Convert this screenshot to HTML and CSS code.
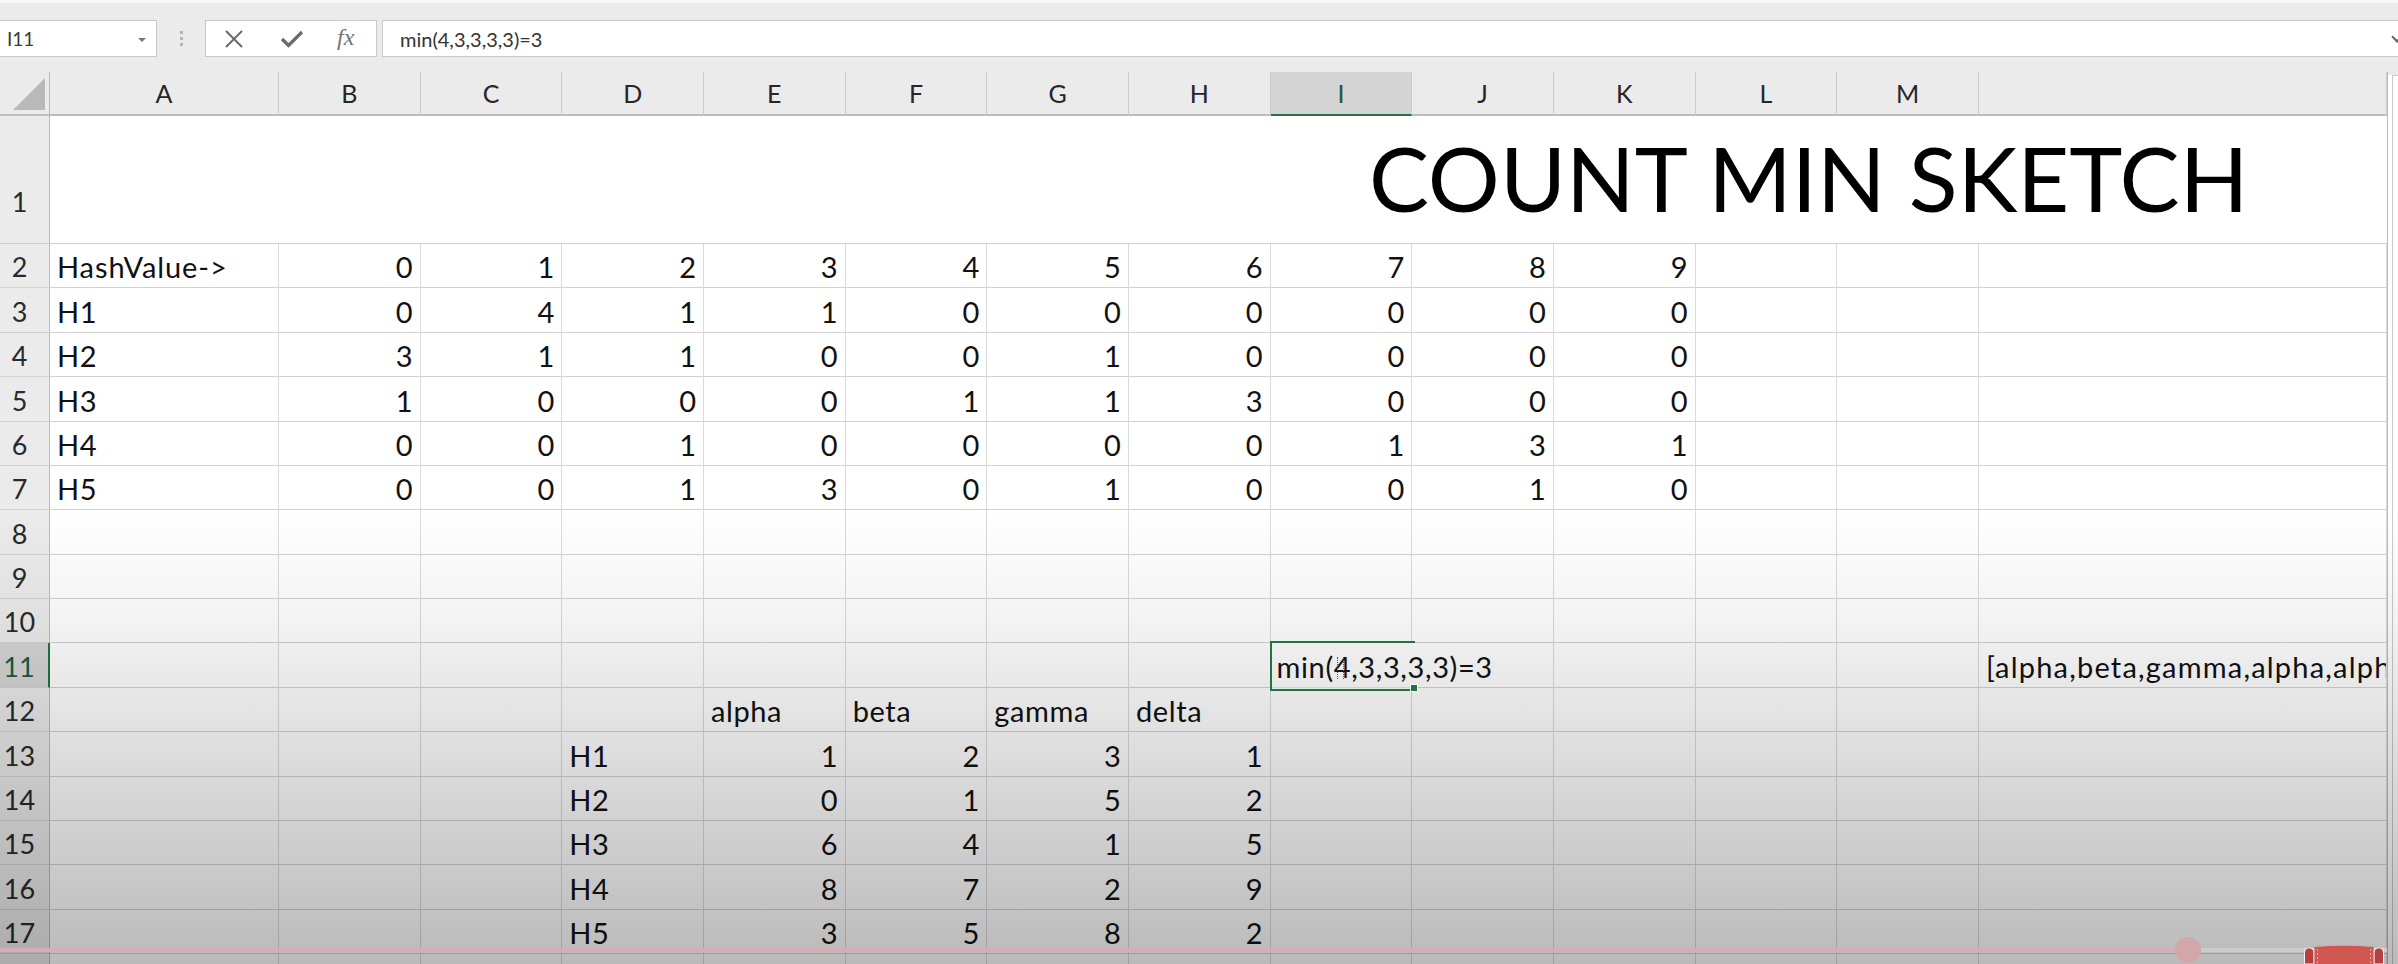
FILE: index.html
```html
<!DOCTYPE html>
<html>
<head>
<meta charset="utf-8">
<title>Count Min Sketch</title>
<link rel="stylesheet" href="styles.css">
</head>
<body>
<div class="top-strip"></div>
<div class="fbar">
  <div class="namebox"><span>I11</span><span class="dd"></span></div>
  <div class="fb-sep"><i></i><i></i><i></i></div>
  <div class="fxbox">
    <svg class="ico-x" width="20" height="18" viewBox="0 0 20 18"><path d="M2 1 L18 17 M18 1 L2 17" stroke="#6a6a6a" stroke-width="2" fill="none"/></svg>
    <svg class="ico-ok" width="24" height="18" viewBox="0 0 24 18"><path d="M2 9 L8.5 15.5 L22 2" stroke="#6a6a6a" stroke-width="3.2" fill="none"/></svg>
    <span class="fx">fx</span>
  </div>
  <div class="finput">min(4,3,3,3,3)=3</div>
  <span class="chev"></span>
</div>
<div class="gap"></div>
<div class="wrap">
  <div class="sheet">
    <div class="corner"><span class="tri"></span></div>
    <div class="ch">A</div><div class="ch">B</div><div class="ch">C</div><div class="ch">D</div><div class="ch">E</div><div class="ch">F</div><div class="ch">G</div><div class="ch">H</div><div class="ch sel">I</div><div class="ch">J</div><div class="ch">K</div><div class="ch">L</div><div class="ch">M</div><div class="ch"></div>

    <div class="rh r1h">1</div><div class="title-cell">COUNT MIN SKETCH</div>

    <div class="rh">2</div><div class="c wide">HashValue-&gt;</div><div class="c n">0</div><div class="c n">1</div><div class="c n">2</div><div class="c n">3</div><div class="c n">4</div><div class="c n">5</div><div class="c n">6</div><div class="c n">7</div><div class="c n">8</div><div class="c n">9</div><div class="c"></div><div class="c"></div><div class="c"></div>

    <div class="rh">3</div><div class="c">H1</div><div class="c n">0</div><div class="c n">4</div><div class="c n">1</div><div class="c n">1</div><div class="c n">0</div><div class="c n">0</div><div class="c n">0</div><div class="c n">0</div><div class="c n">0</div><div class="c n">0</div><div class="c"></div><div class="c"></div><div class="c"></div>

    <div class="rh">4</div><div class="c">H2</div><div class="c n">3</div><div class="c n">1</div><div class="c n">1</div><div class="c n">0</div><div class="c n">0</div><div class="c n">1</div><div class="c n">0</div><div class="c n">0</div><div class="c n">0</div><div class="c n">0</div><div class="c"></div><div class="c"></div><div class="c"></div>

    <div class="rh">5</div><div class="c">H3</div><div class="c n">1</div><div class="c n">0</div><div class="c n">0</div><div class="c n">0</div><div class="c n">1</div><div class="c n">1</div><div class="c n">3</div><div class="c n">0</div><div class="c n">0</div><div class="c n">0</div><div class="c"></div><div class="c"></div><div class="c"></div>

    <div class="rh">6</div><div class="c">H4</div><div class="c n">0</div><div class="c n">0</div><div class="c n">1</div><div class="c n">0</div><div class="c n">0</div><div class="c n">0</div><div class="c n">0</div><div class="c n">1</div><div class="c n">3</div><div class="c n">1</div><div class="c"></div><div class="c"></div><div class="c"></div>

    <div class="rh">7</div><div class="c">H5</div><div class="c n">0</div><div class="c n">0</div><div class="c n">1</div><div class="c n">3</div><div class="c n">0</div><div class="c n">1</div><div class="c n">0</div><div class="c n">0</div><div class="c n">1</div><div class="c n">0</div><div class="c"></div><div class="c"></div><div class="c"></div>

    <div class="rh">8</div><div class="c"></div><div class="c"></div><div class="c"></div><div class="c"></div><div class="c"></div><div class="c"></div><div class="c"></div><div class="c"></div><div class="c"></div><div class="c"></div><div class="c"></div><div class="c"></div><div class="c"></div><div class="c"></div>

    <div class="rh">9</div><div class="c"></div><div class="c"></div><div class="c"></div><div class="c"></div><div class="c"></div><div class="c"></div><div class="c"></div><div class="c"></div><div class="c"></div><div class="c"></div><div class="c"></div><div class="c"></div><div class="c"></div><div class="c"></div>

    <div class="rh">10</div><div class="c"></div><div class="c"></div><div class="c"></div><div class="c"></div><div class="c"></div><div class="c"></div><div class="c"></div><div class="c"></div><div class="c"></div><div class="c"></div><div class="c"></div><div class="c"></div><div class="c"></div><div class="c"></div>

    <div class="rh rsel">11</div><div class="c"></div><div class="c"></div><div class="c"></div><div class="c"></div><div class="c"></div><div class="c"></div><div class="c"></div><div class="c"></div><div class="c active"><span class="edit">min(<span class="cur">4</span>,3,3,3,3)=3</span><span class="caret"></span></div><div class="c spill"></div><div class="c"></div><div class="c"></div><div class="c"></div><div class="c clip">[alpha,beta,gamma,alpha,alph</div>

    <div class="rh">12</div><div class="c"></div><div class="c"></div><div class="c"></div><div class="c"></div><div class="c">alpha</div><div class="c">beta</div><div class="c">gamma</div><div class="c">delta</div><div class="c"></div><div class="c"></div><div class="c"></div><div class="c"></div><div class="c"></div><div class="c"></div>

    <div class="rh">13</div><div class="c"></div><div class="c"></div><div class="c"></div><div class="c">H1</div><div class="c n">1</div><div class="c n">2</div><div class="c n">3</div><div class="c n">1</div><div class="c"></div><div class="c"></div><div class="c"></div><div class="c"></div><div class="c"></div><div class="c"></div>

    <div class="rh">14</div><div class="c"></div><div class="c"></div><div class="c"></div><div class="c">H2</div><div class="c n">0</div><div class="c n">1</div><div class="c n">5</div><div class="c n">2</div><div class="c"></div><div class="c"></div><div class="c"></div><div class="c"></div><div class="c"></div><div class="c"></div>

    <div class="rh">15</div><div class="c"></div><div class="c"></div><div class="c"></div><div class="c">H3</div><div class="c n">6</div><div class="c n">4</div><div class="c n">1</div><div class="c n">5</div><div class="c"></div><div class="c"></div><div class="c"></div><div class="c"></div><div class="c"></div><div class="c"></div>

    <div class="rh">16</div><div class="c"></div><div class="c"></div><div class="c"></div><div class="c">H4</div><div class="c n">8</div><div class="c n">7</div><div class="c n">2</div><div class="c n">9</div><div class="c"></div><div class="c"></div><div class="c"></div><div class="c"></div><div class="c"></div><div class="c"></div>

    <div class="rh">17</div><div class="c"></div><div class="c"></div><div class="c"></div><div class="c">H5</div><div class="c n">3</div><div class="c n">5</div><div class="c n">8</div><div class="c n">2</div><div class="c"></div><div class="c"></div><div class="c"></div><div class="c"></div><div class="c"></div><div class="c"></div>

    <div class="rh"></div><div class="c"></div><div class="c"></div><div class="c"></div><div class="c"></div><div class="c"></div><div class="c"></div><div class="c"></div><div class="c"></div><div class="c"></div><div class="c"></div><div class="c"></div><div class="c"></div><div class="c"></div><div class="c"></div>
  </div>
  <div class="vscroll"><div class="vs-btn"></div></div>
</div>

<div class="shade"></div>
<div class="progress"><div class="played"></div><div class="rest"></div></div>
<div class="scrub"></div>
<svg class="yt-badge" width="80" height="19" viewBox="0 0 80 19">
  <rect x="0" y="3" width="80" height="16" fill="#d9d9d9"/>
  <path d="M0.5 19 V7.5 A4.7 4.7 0 0 1 9.9 7.5 V19 Z" fill="#b4413d" stroke="#f4f4f4" stroke-width="1"/>
  <path d="M70.1 19 V7.5 A4.7 4.7 0 0 1 79.5 7.5 V19 Z" fill="#b4413d" stroke="#f4f4f4" stroke-width="1"/>
  <path d="M10.5 19 V2 Q40 -0.5 69.5 2 V19 Z" fill="#d0574f"/>
  <path d="M13.5 4 V19 M66.5 4 V19" stroke="#eab3ad" stroke-width="1" stroke-dasharray="2 2"/>
</svg>
</body>
</html>
```

FILE: styles.css
```css
* { box-sizing: border-box; }
html, body { margin: 0; padding: 0; }
body {
  width: 2398px;
  height: 964px;
  overflow: hidden;
  position: relative;
  background: #ebebeb;
  font-family: Lato, "Liberation Sans", sans-serif;
  color: #111;
}

/* ---------- formula bar ---------- */
.top-strip {
  height: 20px;
  background: #ebebeb;
  border-top: 3px solid #f7f7f7;
}
.fbar {
  height: 37px;
  display: flex;
  align-items: stretch;
  position: relative;
}
.namebox {
  width: 157px;
  background: #fff;
  border: 1px solid #c9c9c9;
  border-left: none;
  display: flex;
  align-items: center;
  justify-content: space-between;
  padding: 0 10px 0 7px;
  font-size: 19px;
  color: #3a3a3a;
}
.dd {
  width: 0; height: 0;
  border-left: 4px solid transparent;
  border-right: 4px solid transparent;
  border-top: 4px solid #777;
  margin-top: 2px;
}
.fb-sep {
  width: 48px;
  display: flex;
  flex-direction: column;
  align-items: center;
  justify-content: center;
  gap: 3px;
}
.fb-sep i {
  display: block;
  width: 3px; height: 3px;
  background: #b5b5b5;
}
.fxbox {
  width: 172px;
  background: #fff;
  border: 1px solid #c9c9c9;
  display: flex;
  align-items: center;
  padding-left: 18px;
}
.ico-x { margin-right: 36px; }
.ico-ok { margin-right: 33px; }
.fx {
  font-family: "Liberation Serif", serif;
  font-style: italic;
  font-size: 24px;
  color: #767676;
  margin-top: -3px;
}
.finput {
  flex: 1;
  margin-left: 5px;
  background: #fff;
  border: 1px solid #c9c9c9;
  border-right: none;
  display: flex;
  align-items: center;
  padding-left: 17px;
  font-size: 20px;
  color: #333;
}
.chev {
  position: absolute;
  right: -3px;
  top: 13px;
  width: 8px; height: 8px;
  border-right: 2px solid #666;
  border-bottom: 2px solid #666;
  transform: rotate(45deg);
}
.gap { height: 15px; }

/* ---------- grid ---------- */
.wrap {
  display: flex;
  align-items: flex-start;
}
.sheet {
  width: 2388px;
  display: grid;
  grid-template-columns: 50px 229px repeat(12, 141.667px) 1fr;
  grid-template-rows: 44px 128px repeat(16, 44.375px) 44px;
  background: #fff;
  border-right: 1px solid #bdbdbd;
  overflow: hidden;
}
.corner {
  background: #ebebeb;
  border-right: 1px solid #bcbcbc;
  border-bottom: 2px solid #bdbdbd;
  position: relative;
}
.tri {
  position: absolute;
  left: 13px;
  top: 6px;
  width: 0; height: 0;
  border-left: 32px solid transparent;
  border-bottom: 32px solid #b9b9b9;
}
.ch {
  background: #ebebeb;
  border-right: 1px solid #cbcbcb;
  border-bottom: 2px solid #bdbdbd;
  display: flex;
  align-items: center;
  justify-content: center;
  font-size: 25px;
  line-height: 1;
  color: #262626;
}
.ch.sel {
  background: #d4d4d4;
  border-bottom: 2px solid #217346;
  color: #1f5a40;
}
.rh {
  background: #ebebeb;
  border-right: 1px solid #bcbcbc;
  border-bottom: 1px solid #d2d2d2;
  display: flex;
  align-items: flex-end;
  justify-content: center;
  padding: 0 10px 7px 0;
  font-size: 27px;
  line-height: 1;
  color: #2a2a2a;
}
.rh.r1h { padding-bottom: 28px; }
.rh.rsel {
  background: #d6d6d6;
  border-right: 2px solid #217346;
  color: #1f5a40;
}
.title-cell {
  grid-column: 2 / -1;
  border-bottom: 1px solid #d2d2d2;
  display: flex;
  align-items: flex-end;
  padding: 0 0 21px 1319px;
  font-size: 90px;
  line-height: 1;
  color: #000;
  white-space: nowrap;
}
.c {
  border-right: 1px solid #dadada;
  border-bottom: 1px solid #d2d2d2;
  display: flex;
  align-items: flex-end;
  justify-content: flex-start;
  padding: 0 7px 6px 7px;
  font-size: 29px;
  letter-spacing: 0.6px;
  line-height: 1;
  color: #111;
  white-space: nowrap;
  min-width: 0;
}
.c.wide { letter-spacing: 0.9px; }
.c.n { justify-content: flex-end; letter-spacing: 0; }
.c.clip { overflow: hidden; letter-spacing: 1.2px; }
.c.active {
  position: relative;
  z-index: 2;
  overflow: visible;
  border-right-color: transparent;
  padding-left: 6px;
}
.c.active::before {
  content: "";
  position: absolute;
  left: -1px; top: -2px;
  width: 143px; height: 46px;
  border: 2px solid #217346;
  border-right: none;
}
.c.active::after {
  content: "";
  position: absolute;
  left: 139px; top: 41px;
  width: 6px; height: 6px;
  background: #217346;
  border: 1px solid #fff;
}
.cur { position: relative; }
.cur::after {
  content: "";
  position: absolute;
  left: 3px; top: 8px;
  width: 5px; height: 22px;
  border-left: 1px dotted #555;
  border-right: 1px dotted #555;
}
.caret {
  display: inline-block;
  width: 1.5px;
  height: 40px;
  background: #222;
  margin: 0 0 -4px 1px;
}
.vscroll {
  width: 10px;
  margin-top: 3px;
  height: 892px;
  background: #fff;
  padding-left: 4px;
}
.vs-btn {
  height: 100%;
  border-left: 1px solid #c9c9c9;
  border-top: 1px solid #c9c9c9;
}

/* ---------- video overlay ---------- */
.shade {
  position: absolute;
  left: 0; right: 0;
  top: 510px; bottom: 0;
  background: linear-gradient(to bottom, rgba(0,0,0,0) 0%, rgba(0,0,0,0.05) 25%, rgba(0,0,0,0.27) 100%);
  pointer-events: none;
}
.progress {
  position: absolute;
  left: 0;
  top: 948px;
  width: 2387px;
  height: 4px;
  display: flex;
}
.played { width: 2188px; background: #d6adb0; }
.rest { flex: 1; background: #cbcbcb; }
.scrub {
  position: absolute;
  left: 2175px;
  top: 937px;
  width: 26px; height: 26px;
  border-radius: 50%;
  background: #d3a7aa;
}
.yt-badge {
  position: absolute;
  left: 2304px;
  top: 945px;
}
```
